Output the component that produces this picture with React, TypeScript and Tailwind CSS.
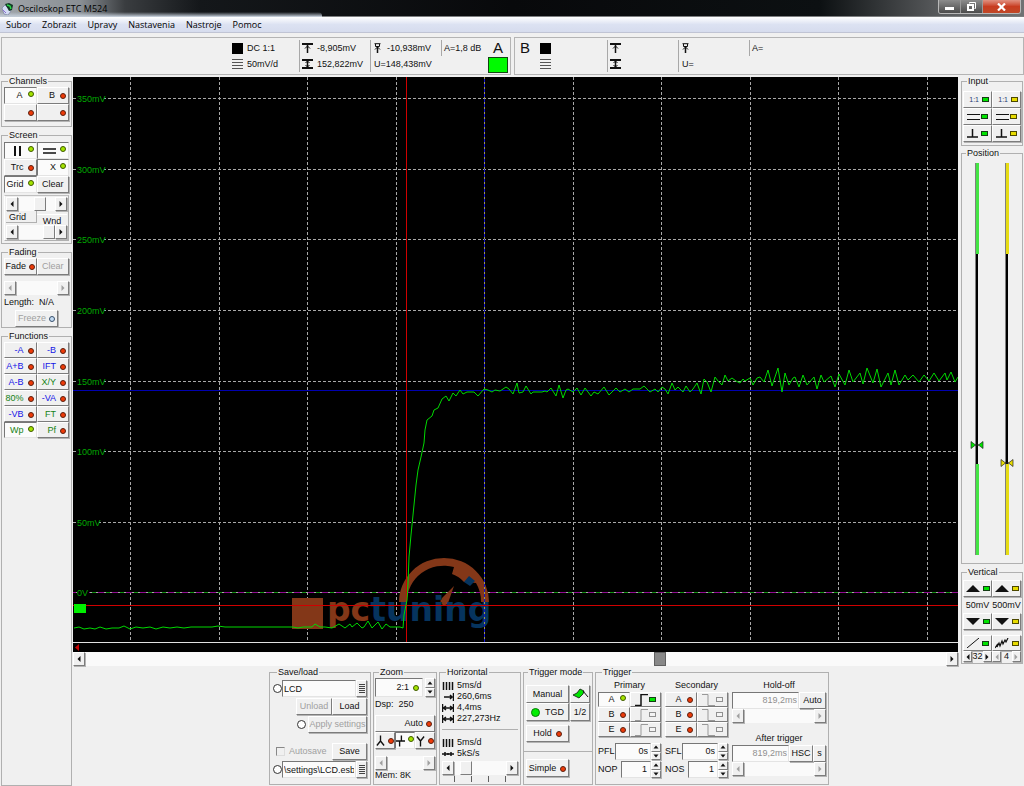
import React from "react";
import clsx from "clsx";

type LedColor = "red" | "green" | "off";

const raised = "border border-t-white border-l-white border-r-[#7c7c7c] border-b-[#7c7c7c] bg-[#f0f0f0] shadow-[1px_1px_0_#b4b4b4]";
const sunken = "border border-t-[#777] border-l-[#777] border-r-[#e4e4e4] border-b-[#e4e4e4] bg-[#fbfbfb]";

const Led = ({ color }: { color: LedColor }) => (
	<span
		className={clsx(
			"size-[6px] shrink-0 rounded-full border",
			color === "red" && "border-[#5a2010] bg-[#ee3a08]",
			color === "green" && "border-[#3f5a00] bg-[#a4e400]",
			color === "off" && "border-[#38506c] bg-[#c4dcf4]"
		)}
	/>
);

const Chip = ({ color }: { color: string }) => (
	<span className={clsx("h-[5px] w-[7px] shrink-0 border", color)} />
);
const greenChip = "border-[#143c14] bg-[#00e400]";
const yellowChip = "border-[#4c4800] bg-[#e8dc00]";
const emptyChip = "border-[#909090] bg-[#f4f4f4]";

interface BtnProps {
	children?: React.ReactNode;
	led?: LedColor;
	on?: boolean;
	disabled?: boolean;
	label?: string;
	className?: string;
}

const Btn = ({ children, led, on, disabled, label, className }: BtnProps) => (
	<button
		type="button"
		aria-label={label}
		aria-pressed={on}
		disabled={disabled}
		className={clsx(
			"flex min-w-0 items-center justify-center gap-[3px] whitespace-nowrap",
			on ? sunken : raised,
			disabled && "text-[#a0a0a0]",
			className
		)}
	>
		{children}
		{led && (
			<span className={on ? "pb-[3px]" : "pt-px"}>
				<span className="flex"><Led color={led} /></span>
			</span>
		)}
	</button>
);

const Group = ({ title, children, className }: { title: string; children: React.ReactNode; className?: string }) => (
	<fieldset className={clsx("min-w-0 border border-[#b0b0b0]", className)}>
		<legend className="ml-[4px] px-px leading-[10px]">{title}</legend>
		{children}
	</fieldset>
);

const Arrow = ({ dir }: { dir: "left" | "right" | "up" | "down" }) => (
	<svg viewBox="0 0 6 6" className="size-[6px]" fill="currentColor">
		{dir === "left" && <path d="M4.5 0v6L1.5 3z" />}
		{dir === "right" && <path d="M1.5 0v6l3-3z" />}
		{dir === "up" && <path d="M0.5 4.5h5L3 1.5z" />}
		{dir === "down" && <path d="M0.5 1.5h5L3 4.5z" />}
	</svg>
);

interface ScrollProps {
	label: string;
	value?: number;
	disabled?: boolean;
	dark?: boolean;
	className?: string;
}

const Scroll = ({ label, value = 0, disabled, dark, className }: ScrollProps) => (
	<div className={clsx("flex h-[14px] bg-[#fafafa]", className)}>
		<Btn label={`${label} left`} disabled={disabled} className="w-[12px] shrink-0"><Arrow dir="left" /></Btn>
		<input
			type="range"
			aria-label={label}
			defaultValue={value}
			disabled={disabled}
			className={clsx(
				"h-full w-0 min-w-0 flex-1 appearance-none bg-transparent [&::-webkit-slider-thumb]:h-[14px] [&::-webkit-slider-thumb]:w-[12px] [&::-webkit-slider-thumb]:appearance-none [&::-webkit-slider-thumb]:border",
				disabled && "[&::-webkit-slider-thumb]:opacity-0",
				dark
					? "[&::-webkit-slider-thumb]:border-[#606060] [&::-webkit-slider-thumb]:bg-[#888]"
					: "[&::-webkit-slider-thumb]:border-t-white [&::-webkit-slider-thumb]:border-l-white [&::-webkit-slider-thumb]:border-r-[#7c7c7c] [&::-webkit-slider-thumb]:border-b-[#7c7c7c] [&::-webkit-slider-thumb]:bg-[#f0f0f0]"
			)}
		/>
		<Btn label={`${label} right`} disabled={disabled} className="w-[12px] shrink-0"><Arrow dir="right" /></Btn>
	</div>
);

const Spin = ({ label, className }: { label: string; className?: string }) => (
	<div className={clsx("grid w-[10px] shrink-0 grid-rows-2", className)}>
		<Btn label={`${label} up`}><Arrow dir="up" /></Btn>
		<Btn label={`${label} down`}><Arrow dir="down" /></Btn>
	</div>
);

const Radio = ({ label }: { label: string }) => (
	<input type="radio" name="slot" aria-label={label} className="size-[9px] shrink-0 appearance-none rounded-full border border-[#333] bg-white" />
);

const icon = { fill: "none", stroke: "#111", strokeWidth: 1 };

const BarsIcon = () => (
	<svg viewBox="0 0 11 10" className="h-[10px] w-[11px]" {...icon}>
		<path d="M0 .5h11M0 3.5h11M0 6.5h11M0 9.5h11" stroke="#555" />
	</svg>
);
const TopIcon = () => (
	<svg viewBox="0 0 11 10" className="h-[10px] w-[11px]" {...icon}>
		<path d="M0 1h11" strokeWidth="2" />
		<path d="M5.5 2v8" strokeWidth="1.5" />
		<path d="M3 5.5L5.5 3 8 5.500" />
	</svg>
);
const SpanIcon = () => (
	<svg viewBox="0 0 11 10" className="h-[10px] w-[11px]" {...icon}>
		<path d="M0 1h11M0 9h11" strokeWidth="2" />
		<path d="M5.5 1v8" strokeWidth="1.5" />
		<path d="M3.5 4l2-2 2 2M3.5 6l2 2 2-2" />
	</svg>
);
const CursorIcon = () => (
	<svg viewBox="0 0 7 10" className="h-[10px] w-[7px]" {...icon}>
		<path d="M.5 .7h6M1.5 1v2.5h4V1M1 6.5L3.5 4 6 6.5" />
		<path d="M3.5 4v6" strokeWidth="1.5" />
	</svg>
);
const ListIcon = () => (
	<svg viewBox="0 0 6 10" className="h-[10px] w-[6px]" {...icon}>
		<path d="M0 .5h6M0 2.5h6M0 4.5h6M0 6.5h6M0 8.5h6" stroke="#444" />
	</svg>
);
const StepIcon = ({ fall, active }: { fall?: boolean; active?: boolean }) => (
	<svg viewBox="0 0 13 12" className="h-[12px] w-[13px]" fill="none" stroke={active ? "#111" : "#999"} strokeWidth={active ? 1.5 : 1}>
		<path d={fall ? "M0 .5h6v11h7" : "M0 11.5h6v-11h7"} />
	</svg>
);

interface ReadoutProps {
	coupling?: string;
	scale?: string;
	top?: string;
	span?: string;
	cursor?: string;
	voltage?: string;
	gain?: string;
}

const Readout = ({ coupling, scale, top, span, cursor, voltage, gain }: ReadoutProps) => (
	<div className="flex whitespace-nowrap py-[2px]">
		<div className="grid w-[67px] grid-rows-2">
			<div className="flex items-center gap-[4px]"><span className="size-[11px] bg-black" />{coupling}</div>
			<div className="flex items-center gap-[4px]"><BarsIcon />{scale}</div>
		</div>
		<div className="grid w-[71px] grid-rows-2 border-l border-[#a8a8a8] pl-[2px]">
			<div className="flex items-center gap-[4px]"><TopIcon />{top}</div>
			<div className="flex items-center gap-[4px]"><SpanIcon />{span}</div>
		</div>
		<div className="grid w-[71px] grid-rows-2 border-l border-[#a8a8a8] pl-[3px]">
			<div className="flex items-center gap-[6px]"><CursorIcon />{cursor}</div>
			<div className="flex items-center">U={voltage}</div>
		</div>
		<div className="grid w-[47px] grid-rows-2">
			<div className="flex items-center border-l border-[#a8a8a8] pl-[2px]">A={gain}</div>
		</div>
	</div>
);

const trace =
	"74,628 79,627 84,629 90,628 95,629 100,627 106,629 112,628 119,628 124,626 130,629 136,627 143,628 150,627 156,629 163,627 170,628 177,627 184,628 191,627 212,627 218,626 225,627 265,627 293,627 298,628 303,627 312,627 315,624 320,627 325,627 332,628 339,624 345,628 350,624 352,627 357,623 362,628 364,627 368,621 372,628 378,622 382,629 386,624 390,627 400,627 403,628 404,615 407,600 408,583 409,557 411,535 413,515 416,485 418,470 421,457 424,443 425,430 427,420 432,416 434,410 438,408 442,399 446,396 449,401 453,393 456,396 460,390 463,394 467,392 474,392 478,396 484,389 488,390 492,392 495,390 500,391 506,387 509,389 513,394 517,383 519,393 523,392 526,386 531,394 533,392 542,392 545,391 547,392 551,388 556,396 559,385 563,398 566,390 568,389 573,392 577,388 581,395 585,388 591,396 594,392 598,394 604,387 609,395 616,388 620,392 625,389 629,392 633,389 640,389 644,386 647,389 650,392 655,389 658,392 662,387 665,389 668,394 672,383 675,390 678,387 683,392 686,386 690,392 693,389 697,383 701,394 704,379 707,382 711,392 715,377 718,381 722,385 725,375 728,381 732,378 736,381 740,383 743,379 745,381 750,378 753,385 757,378 760,377 764,382 768,370 772,386 778,368 782,392 785,373 789,385 793,378 795,377 799,387 803,375 807,385 814,377 817,389 821,375 824,382 831,376 835,387 839,374 845,385 849,370 853,382 860,373 863,384 867,368 873,383 877,369 881,387 888,373 891,385 895,370 899,385 905,375 908,380 913,375 919,382 924,375 929,381 934,373 939,381 945,373 947,380 951,372 955,382 958,377";

const columns = [130, 219, 307, 396, 573, 661, 750, 838, 927];
const levels = [
	{ y: 98, text: "350mV" },
	{ y: 169, text: "300mV" },
	{ y: 239, text: "250mV" },
	{ y: 310, text: "200mV" },
	{ y: 381, text: "150mV" },
	{ y: 451, text: "100mV" },
	{ y: 522, text: "50mV" },
	{ y: 592, text: "0V" },
];

const Plot = () => (
	<svg viewBox="73 77 885 575" className="block w-full bg-black" fill="none">
		{columns.map((x) => (
			<path key={x} d={`M${x + 0.5} 77V642`} stroke="#a8a8a8" strokeDasharray="3 2" />
		))}
		{levels.slice(0, -1).map(({ y }) => (
			<path key={y} d={`M73 ${y + 0.5}H958`} stroke="#a8a8a8" strokeDasharray="3 2" />
		))}
		{/* zero level */}
		<path d="M73 592.5H958" stroke="#900a90" />
		<path d="M76 592.5H958" stroke="#a8a8a8" strokeDasharray="8 6" />
		<path d="M78 592.5H958" stroke="#109010" strokeDasharray="4 10" />
		{/* logo */}
		<g fill="#833718">
			<path d="M292 598h31v31h-31z" />
			<path d="M399 602a45 44 0 0 1 90 0h-8a37 36 0 0 0-5-19l-12-1a28 26 0 0 0-12-8l2-7a37 36 0 0 0-47 35z" />
			<path d="M454 586l-6 17a4 4 0 1 1-6-5z" />
		</g>
		<path d="M469 576l6 5-5 5-6-4z" fill="#06345e" />
		<text x="327" y="621" fontSize="33" fontWeight="bold" fontFamily="'DejaVu Sans', sans-serif" fill="#06345e">
			<tspan fill="#833718">pc</tspan>tuning
		</text>
		{/* cursors */}
		<path d="M73 390.5H958" stroke="#0000b0" />
		<path d="M484.5 77V642" stroke="#1010d0" />
		<path d="M484.5 77V642" stroke="#a09a50" strokeDasharray="2 3" />
		<path d="M73 605.5H958" stroke="#d00000" />
		<path d="M406.5 77V642" stroke="#d00000" />
		<polyline points={trace} stroke="#00d800" />
		{levels.map(({ y, text }) => (
			<g key={y}>
				<rect x="77" y={y - 4} width={text.length * 5 + 2} height="9" fill="#000" />
				<text x="77" y={y + 4} fontSize="9" fill="#00a800">{text}</text>
			</g>
		))}
		<path d="M74 604h12v9H74z" fill="#00f000" />
		<path d="M73 642.5H958" stroke="#e0e0e0" />
		<path d="M79 644v7l-4-3.500z" fill="#c80000" />
	</svg>
);

const functions: { name: string; tone: string; on?: boolean }[] = [
	{ name: "-A", tone: "text-[#1414e6]" },
	{ name: "-B", tone: "text-[#1414e6]" },
	{ name: "A+B", tone: "text-[#1414e6]" },
	{ name: "IFT", tone: "text-[#1414e6]" },
	{ name: "A-B", tone: "text-[#1414e6]" },
	{ name: "X/Y", tone: "text-[#148214]" },
	{ name: "80%", tone: "text-[#148214]" },
	{ name: "-VA", tone: "text-[#1414e6]" },
	{ name: "-VB", tone: "text-[#1414e6]" },
	{ name: "FT", tone: "text-[#148214]" },
	{ name: "Wp", tone: "text-[#148214]", on: true },
	{ name: "Pf", tone: "text-[#148214]" },
];

const LeftPanel = () => (
	<aside className="flex w-[73px] shrink-0 flex-col gap-[3px] px-px">
		<Group title="Channels" className="px-[2px] pt-px pb-[5px]">
			<div className="grid auto-rows-[17px] grid-cols-2">
				<Btn on led="green" className="justify-end gap-[5px] pr-[2px]">A</Btn>
				<Btn led="red" className="justify-end gap-[5px] pr-[2px]">B</Btn>
				<Btn led="red" label="Channel C" className="justify-end pr-[2px]" />
				<Btn led="red" label="Channel D" className="justify-end pr-[2px]" />
			</div>
		</Group>

		<Group title="Screen" className="px-[2px] pt-[2px] pb-[2px]">
			<div className="grid auto-rows-[17px] grid-cols-2">
				<Btn on led="green" label="Vertical cursors" className="justify-end gap-[7px] pr-[2px]">
					<svg viewBox="0 0 7 10" className="h-[10px] w-[7px]"><path d="M1 0v10M6 0v10" stroke="#111" strokeWidth="2" /></svg>
				</Btn>
				<Btn on led="green" label="Horizontal cursors" className="justify-end gap-[4px] pr-[2px]">
					<svg viewBox="0 0 13 6" className="h-[6px] w-[13px]"><path d="M0 1h13M0 5h13" stroke="#111" strokeWidth="1.500" /></svg>
				</Btn>
				<Btn led="red" className="justify-end gap-[4px] pr-[2px]">Trc</Btn>
				<Btn on led="green" className="justify-end gap-[4px] pr-[2px]">X</Btn>
				<Btn on led="green" className="justify-end gap-[4px] pr-[2px]">Grid</Btn>
				<Btn>Clear</Btn>
			</div>
			<div className="mt-[2px] border border-t-[#c0c0c0] border-l-white border-r-[#b0b0b0] border-b-[#b0b0b0] px-px py-px">
				<Scroll label="Grid" value={65} />
				<div className="flex h-[14px] leading-[10px]">
					<span className="h-[12px] w-[31px] border-r border-b border-[#b0b0b0] pt-px pl-[3px]">Grid</span>
					<span className="mt-[3px] flex-1 border-t border-white pt-px text-center">Wnd</span>
				</div>
				<Scroll label="Wnd" value={100} />
			</div>
		</Group>

		<Group title="Fading" className="px-[2px] pt-px">
			<div className="grid h-[17px] grid-cols-2">
				<Btn led="red">Fade</Btn>
				<Btn disabled>Clear</Btn>
			</div>
			<Scroll label="Fading length" disabled className="mt-[6px]" />
			<p className="whitespace-pre leading-[15px]">Length:  N/A</p>
			<Btn disabled led="off" className="mx-auto h-[17px] w-[43px]">Freeze</Btn>
		</Group>

		<Group title="Functions" className="flex-1 px-[2px] pt-px">
			<div className="grid auto-rows-[16px] grid-cols-2">
				{functions.map((f) => (
					<Btn key={f.name} led={f.on ? "green" : "red"} on={f.on} className={clsx("justify-end gap-[4px] pr-[2px]", f.tone)}>
						{f.name}
					</Btn>
				))}
			</div>
		</Group>
	</aside>
);

const PositionSlider = ({ label, value, line, fill }: { label: string; value: number; line: string; fill: string }) => (
	<div className="relative flex h-[392px] w-[14px] justify-center">
		<div className="flex w-[4px] flex-col border-l border-[#808080]">
			<span className={clsx("flex-[91]", line)} />
			<span className="mr-px flex-[210] bg-black" />
			<span className={clsx("flex-[91]", line)} />
		</div>
		<svg viewBox="0 0 14 8" className="absolute left-0 h-[8px] w-[14px] -translate-y-1/2" style={{ top: `${value}%` }}>
			<path d="M1 .5v7l4.500-3.500zM13 .5v7l-4.500-3.500z" fill={fill} stroke="#222" strokeWidth=".7" />
			<path d="M5 4h4" stroke="#222" />
		</svg>
		<input type="range" aria-label={label} defaultValue={100 - value} className="absolute inset-0 h-full w-full opacity-0 [direction:rtl] [writing-mode:vertical-lr]" />
	</div>
);

const BigArrow = ({ down }: { down?: boolean }) => (
	<svg viewBox="0 0 14 7" className="h-[7px] w-[14px]"><path d={down ? "M0 0h14L7 7z" : "M0 7h14L7 0z"} fill="#111" /></svg>
);

const RightPanel = () => (
	<aside className="flex w-[66px] shrink-0 flex-col gap-[2px] self-start pr-px pl-[3px]">
		<Group title="Input" className="px-px pt-[5px] pb-[3px]">
			<div className="grid auto-rows-[17px] grid-cols-2">
				{[greenChip, yellowChip].map((c) => (
					<Btn key={c} className="justify-end pr-[2px]"><span className="text-[7px] text-[#2a3a70]">1:1</span><Chip color={c} /></Btn>
				))}
				{[greenChip, yellowChip].map((c) => (
					<Btn key={c} label="DC coupling" className="justify-end gap-px pr-[3px]">
						<svg viewBox="0 0 13 6" className="h-[6px] w-[13px]"><path d="M0 .5h13M0 5.500h13" stroke="#111" /></svg>
						<Chip color={c} />
					</Btn>
				))}
				{[greenChip, yellowChip].map((c) => (
					<Btn key={c} label="Ground" className="justify-end pr-[3px]">
						<svg viewBox="0 0 11 9" className="h-[9px] w-[11px]"><path d="M0 8h11M5.500 0v8" stroke="#111" strokeWidth="1.500" /></svg>
						<Chip color={c} />
					</Btn>
				))}
			</div>
		</Group>

		<Group title="Position" className="pt-[5px] pb-[8px]">
			<div className="flex justify-around">
				<PositionSlider label="Position A" value={72} line="bg-[#44e444]" fill="#00e400" />
				<PositionSlider label="Position B" value={76.5} line="bg-[#e6dc14]" fill="#e8dc00" />
			</div>
		</Group>

		<Group title="Vertical" className="mt-px px-px pt-[3px] pb-px">
			<div className="grid grid-cols-2">
				<Btn label="A scale up" className="h-[17px]"><BigArrow /><Chip color={greenChip} /></Btn>
				<Btn label="B scale up" className="h-[17px]"><BigArrow /><Chip color={yellowChip} /></Btn>
				<span className="text-center leading-[16px]">50mV</span>
				<span className="text-center leading-[16px]">500mV</span>
				<Btn label="A scale down" className="h-[17px]"><BigArrow down /><Chip color={greenChip} /></Btn>
				<Btn label="B scale down" className="h-[17px]"><BigArrow down /><Chip color={yellowChip} /></Btn>
			</div>
			<div className="mt-[5px] grid grid-cols-2">
				<Btn label="A line" className="h-[16px]">
					<svg viewBox="0 0 12 10" className="h-[10px] w-[12px]"><path d="M0 10L12 0" stroke="#111" /></svg>
					<Chip color={greenChip} />
				</Btn>
				<Btn label="B noise" className="h-[16px] gap-0">
					<svg viewBox="0 0 14 11" className="h-[11px] w-[14px]"><path d="M0 10l2-3 0 2 2-4 1 3 2-5 1 3 2-4 1 2 2-4" fill="none" stroke="#111" strokeWidth="1.200" /></svg>
					<Chip color={yellowChip} />
				</Btn>
				<div className="flex h-[11px] items-center justify-between leading-[11px]">
					<Btn label="A average down" className="h-[11px] w-[9px]"><Arrow dir="left" /></Btn>32<Btn label="A average up" className="h-[11px] w-[9px]"><Arrow dir="right" /></Btn>
				</div>
				<div className="flex h-[11px] items-center justify-between leading-[11px]">
					<Btn disabled label="B average down" className="h-[11px] w-[9px]"><Arrow dir="left" /></Btn>4<Btn disabled label="B average up" className="h-[11px] w-[9px]"><Arrow dir="right" /></Btn>
				</div>
			</div>
		</Group>
	</aside>
);

const SaveLoad = () => (
	<Group title="Save/load" className="w-[102px] px-[3px] pt-[3px]">
		<div className="flex h-[17px] items-center">
			<Radio label="Use preset" />
			<input aria-label="Preset" defaultValue="LCD" className={clsx("h-full w-0 flex-1 px-px", sunken)} />
			<Btn label="Preset list" className="h-full w-[11px]"><ListIcon /></Btn>
		</div>
		<div className="mt-px flex h-[17px] justify-end">
			<Btn disabled className="w-[36px]">Unload</Btn>
			<Btn className="w-[35px]">Load</Btn>
		</div>
		<div className="mt-px flex h-[17px] items-center justify-end gap-[2px]">
			<Radio label="Apply" />
			<Btn disabled className="h-full w-[59px]">Apply settings</Btn>
		</div>
		<div className="mt-[10px] flex h-[17px] items-center justify-between pl-[3px]">
			<label className="flex items-center gap-[4px] text-[#a0a0a0]">
				<input type="checkbox" disabled className="size-[9px] appearance-none border border-[#888] border-r-[#ddd] border-b-[#ddd]" />
				Autosave
			</label>
			<Btn className="h-full w-[35px]">Save</Btn>
		</div>
		<div className="mt-px flex h-[17px] items-center">
			<Radio label="Use file" />
			<input aria-label="File" defaultValue="\settings\LCD.esb" className={clsx("h-full w-0 flex-1 px-px", sunken)} />
			<Btn label="File list" className="h-full w-[11px]"><ListIcon /></Btn>
		</div>
	</Group>
);

const Zoom = () => (
	<Group title="Zoom" className="w-[64px] px-px pt-px">
		<div className="flex h-[19px] gap-[2px]">
			<div className={clsx("flex flex-1 items-center justify-end gap-[4px] pr-[3px]", sunken)}>2:1 <Led color="green" /></div>
			<Spin label="Zoom" />
		</div>
		<p className="whitespace-pre leading-[14px]">Dsp:  250</p>
		<Btn led="red" className="mt-[4px] h-[17px] w-full justify-end pr-[2px]">Auto</Btn>
		<div className="grid h-[17px] grid-cols-3">
			<Btn led="red" label="Peak" className="gap-0">
				<svg viewBox="0 0 10 12" className="h-[12px] w-[10px]"><path d="M5 0v7M5 6l-4 5M5 6l4 5" fill="none" stroke="#111" strokeWidth="1.500" /></svg>
			</Btn>
			<Btn on led="green" label="Edge" className="gap-0">
				<svg viewBox="0 0 10 12" className="h-[12px] w-[10px]"><path d="M0 6h10M4 12V6M6 6V0" fill="none" stroke="#111" strokeWidth="1.500" /></svg>
			</Btn>
			<Btn led="red" label="Valley" className="gap-0">
				<svg viewBox="0 0 10 12" className="h-[12px] w-[10px]"><path d="M5 12V6M5 6L1 1M5 6l4-5" fill="none" stroke="#111" strokeWidth="1.500" /></svg>
			</Btn>
		</div>
		<Scroll label="Memory" disabled className="mt-[7px]" />
		<p className="leading-[11px]">Mem: 8K</p>
	</Group>
);

const fourBars = "M1.500 1v8M4.500 1v8M7.500 1v8M10.500 1v8";
const span = "M.5 1v8M11.500 1v8M1 5h10M4 3L1.500 5 4 7M8 3l2.500 2L8 7";
const horizontal = [
	{ d: fourBars, text: "5ms/d" },
	{ d: "M2 5h8M8 3l2 2-2 2M11.500 1v8", text: "260,6ms" },
	{ d: span, text: "4,4ms" },
	{ d: span, text: "227,273Hz" },
];
const sampling = [
	{ d: fourBars, text: "5ms/d" },
	{ d: "M0 5h12M3 3v4M6 4v2M9 3v4", text: "5kS/s" },
];

const InfoLines = ({ lines }: { lines: { d: string; text: string }[] }) => (
	<ul>
		{lines.map((l) => (
			<li key={l.text} className="flex h-[11px] items-center gap-[3px]">
				<svg viewBox="0 0 12 10" className="h-[10px] w-[12px]"><path d={l.d} fill="none" stroke="#111" strokeWidth="1.500" /></svg>
				{l.text}
			</li>
		))}
	</ul>
);

const Horizontal = () => (
	<Group title="Horizontal" className="w-[82px] px-[2px] pt-[3px]">
		<InfoLines lines={horizontal} />
		<hr className="mt-[5px] mb-[7px] border-[#b0b0b0]" />
		<InfoLines lines={sampling} />
		<Scroll label="Time base" value={15} className="mt-[2px]" />
		<div className="flex h-[7px] justify-between px-[12px] pt-px">
			{[0, 1, 2, 3].map((t) => <span key={t} className="w-px bg-[#606060]" />)}
		</div>
	</Group>
);

const TriggerMode = () => (
	<Group title="Trigger mode" className="w-[70px] pt-[8px]">
		<div className="grid auto-rows-[18px] grid-cols-[43px_1fr] px-[2px]">
			<Btn>Manual</Btn>
			<Btn label="Run" className="ml-px">
				<svg viewBox="0 0 17 12" className="h-[12px] w-[17px]">
					<path d="M1 7l4-2 3-4 4 2-1 3-4 4z" fill="#00e400" stroke="#111" strokeWidth=".8" />
					<path d="M11 3l5 6" stroke="#111" />
				</svg>
			</Btn>
			<Btn className="gap-[5px]"><span className="size-[9px] rounded-full border border-[#087808] bg-[#00ee00]" />TGD</Btn>
			<Btn className="ml-px">1/2</Btn>
		</div>
		<Btn led="red" className="mt-[4px] ml-[2px] h-[17px] w-[43px] gap-[4px]">Hold</Btn>
		<hr className="mt-[9px] mb-[7px] border-[#b0b0b0]" />
		<Btn led="red" className="ml-[2px] h-[18px] w-[43px] gap-[4px]">Simple</Btn>
	</Group>
);

interface SourceProps {
	title: string;
	active?: string;
	fall?: boolean;
	filter: string;
	count: string;
}

const TriggerSource = ({ title, active, fall, filter, count }: SourceProps) => (
	<div className="w-[63px]">
		<p className="text-center leading-[12px]">{title}</p>
		<div className="mt-px grid auto-rows-[15px] grid-cols-2">
			{["A", "B", "E"].map((s) => (
				<React.Fragment key={s}>
					<Btn on={s === active} led={s === active ? "green" : "red"} className="justify-end gap-[5px] pr-[3px]">{s}</Btn>
					<Btn label={`${title} ${s} edge`} className="gap-px"><StepIcon fall={fall} active={s === active} /><Chip color={s === active ? greenChip : emptyChip} /></Btn>
				</React.Fragment>
			))}
		</div>
		<label className="mt-[6px] flex h-[17px] items-center justify-between">
			{filter}
			<span className="flex h-full">
				<input defaultValue="0s" className={clsx("w-[36px] px-[2px] text-right", sunken)} />
				<Spin label={filter} />
			</span>
		</label>
		<label className="mt-px flex h-[17px] items-center justify-between">
			{count}
			<span className="flex h-full">
				<input defaultValue="1" className={clsx("w-[30px] px-[3px] text-right", sunken)} />
				<Spin label={count} />
			</span>
		</label>
	</div>
);

const Trigger = () => (
	<Group title="Trigger" className="w-[234px] px-[2px] pt-[2px]">
		<div className="flex gap-[4px]">
			<TriggerSource title="Primary" active="A" filter="PFL" count="NOP" />
			<TriggerSource title="Secondary" fall filter="SFL" count="NOS" />
			<div className="flex-1">
				<p className="text-center leading-[13px]">Hold-off</p>
				<div className="flex h-[17px]">
					<input aria-label="Hold-off" disabled defaultValue="819,2ms" className={clsx("w-0 flex-1 px-px text-right text-[#909090]", sunken)} />
					<Btn className="w-[27px]">Auto</Btn>
				</div>
				<Scroll label="Hold-off" disabled />
				<p className="mt-[8px] text-center leading-[14px]">After trigger</p>
				<div className="flex h-[17px]">
					<input aria-label="After trigger" disabled defaultValue="819,2ms" className={clsx("w-0 flex-1 px-px text-right text-[#909090]", sunken)} />
					<Btn className="w-[24px]">HSC</Btn>
					<Btn className="w-[13px]">s</Btn>
				</div>
				<Scroll label="After trigger" disabled />
			</div>
		</div>
	</Group>
);

const menus = ["Subor", "Zobrazit", "Upravy", "Nastavenia", "Nastroje", "Pomoc"];

export default function App() {
	return (
		<div className="flex min-h-screen flex-col bg-[#f0f0f0] font-['Liberation_Sans',Arial,sans-serif] text-[9px] leading-[11px] text-[#111]">
			<header className="font-['Open_Sans','Noto_Sans',sans-serif]">
				<div className="relative flex h-[17px] items-start justify-between bg-[linear-gradient(to_right,#a0a5aa_0,#8a8f94_80px,#3a3d40_125px,#14171a_200px,#08090b_50%,#0c1012_80%,#5a5c5e_92%,#707274_100%)] shadow-[inset_0_-1px_0_#7c7e80]">
					{/* aero glow under the caption */}
					<span className="absolute bottom-0 left-0 h-[5px] w-[322px] rounded-tr-[4px] bg-gradient-to-b from-transparent to-[#c8d2de]" />
					<h1 className="relative flex h-full items-center gap-[4px] pl-px text-[9px] text-black">
						<svg viewBox="0 0 13 13" className="size-[13px]">
							<path d="M1 6l3-3 6 6-3 4-4-1z" fill="#d4dcf4" stroke="#7880a0" strokeWidth=".7" />
							<path d="M4 2l4-1 4 2-1 5-3 1z" fill="#123a24" />
							<path d="M6 3l3 1 1 3" fill="none" stroke="#28d848" strokeWidth="1.500" />
							<path d="M2 8l3 3" stroke="#8a70d0" />
						</svg>
						Osciloskop ETC M524
					</h1>
					<div className="mr-[3px] flex h-[14px] overflow-hidden rounded-b-[3px] border border-t-0 border-[#b8b8b8]">
						<button type="button" aria-label="Minimize" className="flex w-[22px] items-center justify-center border-r border-[#999] bg-gradient-to-b from-[#8c8c8c] to-[#4c4c4c]">
							<span className="mt-[3px] h-[3px] w-[9px] bg-white" />
						</button>
						<button type="button" aria-label="Restore" className="flex w-[22px] items-center justify-center border-r border-[#999] bg-gradient-to-b from-[#8c8c8c] to-[#4c4c4c]">
							<svg viewBox="0 0 9 9" className="size-[9px]" fill="none" stroke="white"><path d="M2.500 1.500V.5h6v6h-1" /><path d="M1 3h5v5H1z" strokeWidth="2" /></svg>
						</button>
						<button type="button" aria-label="Close" className="flex w-[37px] items-center justify-center bg-gradient-to-b from-[#e09080] via-[#c83c20] to-[#c04828]">
							<svg viewBox="0 0 9 8" className="h-[8px] w-[9px]"><path d="M1 0.500l7 7M8 .5l-7 7" stroke="white" strokeWidth="2.200" /></svg>
						</button>
					</div>
				</div>
				<nav className="flex h-[16px] items-center gap-[11px] border-b border-[#c0c4d4] bg-gradient-to-b from-white via-[#dce2f2] to-[#d6dcee] pl-[6px] text-black">
					{menus.map((m) => <button key={m} type="button">{m}</button>)}
				</nav>
			</header>

			<section className="mt-[4px] mb-px grid grid-cols-2 gap-[3px] pl-px">
				<div className="flex h-[38px] justify-end border border-[#b4b4b4] pr-[2px]">
					<Readout coupling="DC 1:1" scale="50mV/d" top="-8,905mV" span="152,822mV" cursor="-10,938mV" voltage="148,438mV" gain="1,8 dB" />
					<div className="flex w-[20px] flex-col items-center justify-between pt-[2px] pb-px text-[15px] leading-[16px]">
						A
						<span className="h-[16px] w-full border border-[#124412] bg-[#00fa00]" />
					</div>
				</div>
				<div className="flex h-[38px] border border-[#b4b4b4] pl-[5px]">
					<span className="w-[20px] pt-[2px] text-[15px] leading-[16px]">B</span>
					<Readout />
				</div>
			</section>

			<main className="flex flex-1">
				<LeftPanel />
				<div className="min-w-0 flex-1 pt-px">
					<Plot />
					<Scroll label="Time position" value={67} dark />
					<div className="mt-px ml-[196px] flex gap-[2px] [&>fieldset]:h-[118px] [&>fieldset]:shrink-0">
						<SaveLoad />
						<Zoom />
						<Horizontal />
						<TriggerMode />
						<Trigger />
					</div>
				</div>
				<RightPanel />
			</main>
		</div>
	);
}
